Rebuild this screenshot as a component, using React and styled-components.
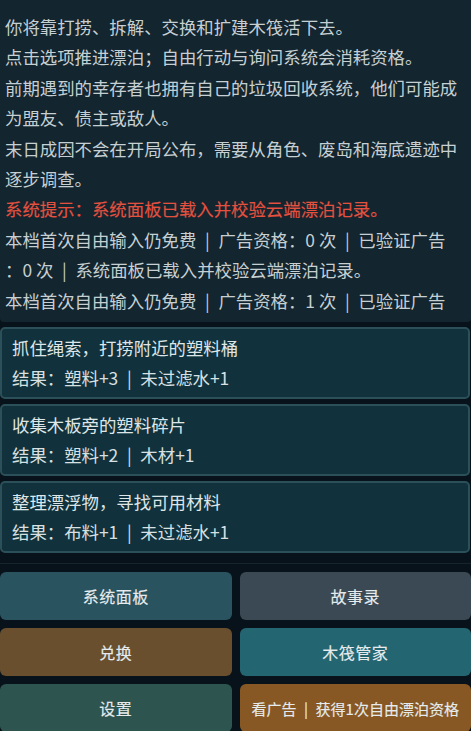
import React from 'react'
import styled, { createGlobalStyle } from 'styled-components'

const GlobalStyle = createGlobalStyle`
  html, body {
    margin: 0;
    padding: 0;
    background: #07121a;
  }
  body {
    font-family: "Noto Sans CJK SC", "Noto Sans", sans-serif;
    overflow: hidden;
  }
`

// separator used in the game texts: a thin bar with wide spaces round it
const SEP = '\u2002|\u2002'

const logLines = [
  { text: '你将靠打捞、拆解、交换和扩建木筏活下去。' },
  { text: '点击选项推进漂泊；自由行动与询问系统会消耗资格。' },
  { text: '前期遇到的幸存者也拥有自己的垃圾回收系统，他们可能成\n为盟友、债主或敌人。' },
  { text: '末日成因不会在开局公布，需要从角色、废岛和海底遗迹中\n逐步调查。' },
  { text: '系统提示：系统面板已载入并校验云端漂泊记录。', alert: true },
  { text: `本档首次自由输入仍免费${SEP}广告资格：0 次${SEP}已验证广告\n：0 次${SEP}系统面板已载入并校验云端漂泊记录。` },
  { text: `本档首次自由输入仍免费${SEP}广告资格：1 次${SEP}已验证广告` },
]

const options = [
  { title: '抓住绳索，打捞附近的塑料桶', result: `结果：塑料+3${SEP}未过滤水+1` },
  { title: '收集木板旁的塑料碎片', result: `结果：塑料+2${SEP}木材+1` },
  { title: '整理漂浮物，寻找可用材料', result: `结果：布料+1${SEP}未过滤水+1` },
]

const actions = [
  { label: '系统面板', tone: '#29535f' },
  { label: '故事录', tone: '#3a4953' },
  { label: '兑换', tone: '#694f2e' },
  { label: '木筏管家', tone: '#236672' },
  { label: '设置', tone: '#2e544f' },
  { label: `看广告${SEP}获得1次自由漂泊资格`, tone: '#875824', small: true },
]

function App() {
  return (
    <>
      <GlobalStyle />
      <Screen>
        <LogPanel>
          {logLines.map((line, i) => (
            <LogLine key={i} $alert={line.alert}>{line.text}</LogLine>
          ))}
        </LogPanel>

        <OptionList>
          {options.map((opt, i) => (
            <OptionCard key={i}>
              <OptionTitle>{opt.title}</OptionTitle>
              <OptionResult>{opt.result}</OptionResult>
            </OptionCard>
          ))}
        </OptionList>

        <ActionGrid>
          {actions.map((a, i) => (
            <ActionButton key={i} $tone={a.tone} $small={a.small}>
              {a.label}
            </ActionButton>
          ))}
        </ActionGrid>
      </Screen>
    </>
  )
}

const Screen = styled.div`
  width: 471px;
  height: 731px;
  display: flex;
  flex-direction: column;
  background: #07121a;
  overflow: hidden;
`

const LogPanel = styled.div`
  height: 322px;
  flex-shrink: 0;
  box-sizing: border-box;
  padding: 12px 4px 0 5px;
  background: #13252f;
  border-radius: 0 0 4px 4px;
  overflow: hidden;
`

const LogLine = styled.div`
  font-size: 17.4px;
  line-height: 30.4px;
  white-space: pre-line;
  color: ${p => (p.$alert ? '#e4513f' : '#c6d0d3')};
  -webkit-text-stroke: ${p => (p.$alert ? '0.15px #e4513f' : '0')};
`

const OptionList = styled.div`
  display: flex;
  flex-direction: column;
  gap: 5px;
  margin-top: 5px;
`

const OptionCard = styled.div`
  box-sizing: border-box;
  height: 72px;
  margin-right: 1px;
  padding: 4px 10px;
  background: #11323d;
  border: 2px solid #2b505a;
  border-radius: 5px;
  display: flex;
  flex-direction: column;
`

const OptionTitle = styled.div`
  font-size: 17.4px;
  line-height: 30px;
  color: #dfe6e8;
  white-space: pre;
`

const OptionResult = styled(OptionTitle)`
  color: #d8e0e2;
`

const ActionGrid = styled.div`
  margin-top: 10px;
  padding-top: 8px;
  border-top: 1px solid #15242d;
  display: grid;
  grid-template-columns: 1fr 1fr;
  grid-auto-rows: 48px;
  column-gap: 8px;
  row-gap: 8px;
`

const ActionButton = styled.button`
  border: none;
  border-radius: 6px;
  background: ${p => p.$tone};
  color: #e6ecee;
  font-family: "Noto Sans CJK SC", "Noto Sans", sans-serif;
  font-size: ${p => (p.$small ? '15px' : '16px')};
  font-weight: 400;
  -webkit-text-stroke: 0.15px #e6ecee;
  letter-spacing: ${p => (p.$small ? '0' : '0.5px')};
  padding: 0 4px;
  white-space: pre;
  cursor: pointer;
`

export default App
